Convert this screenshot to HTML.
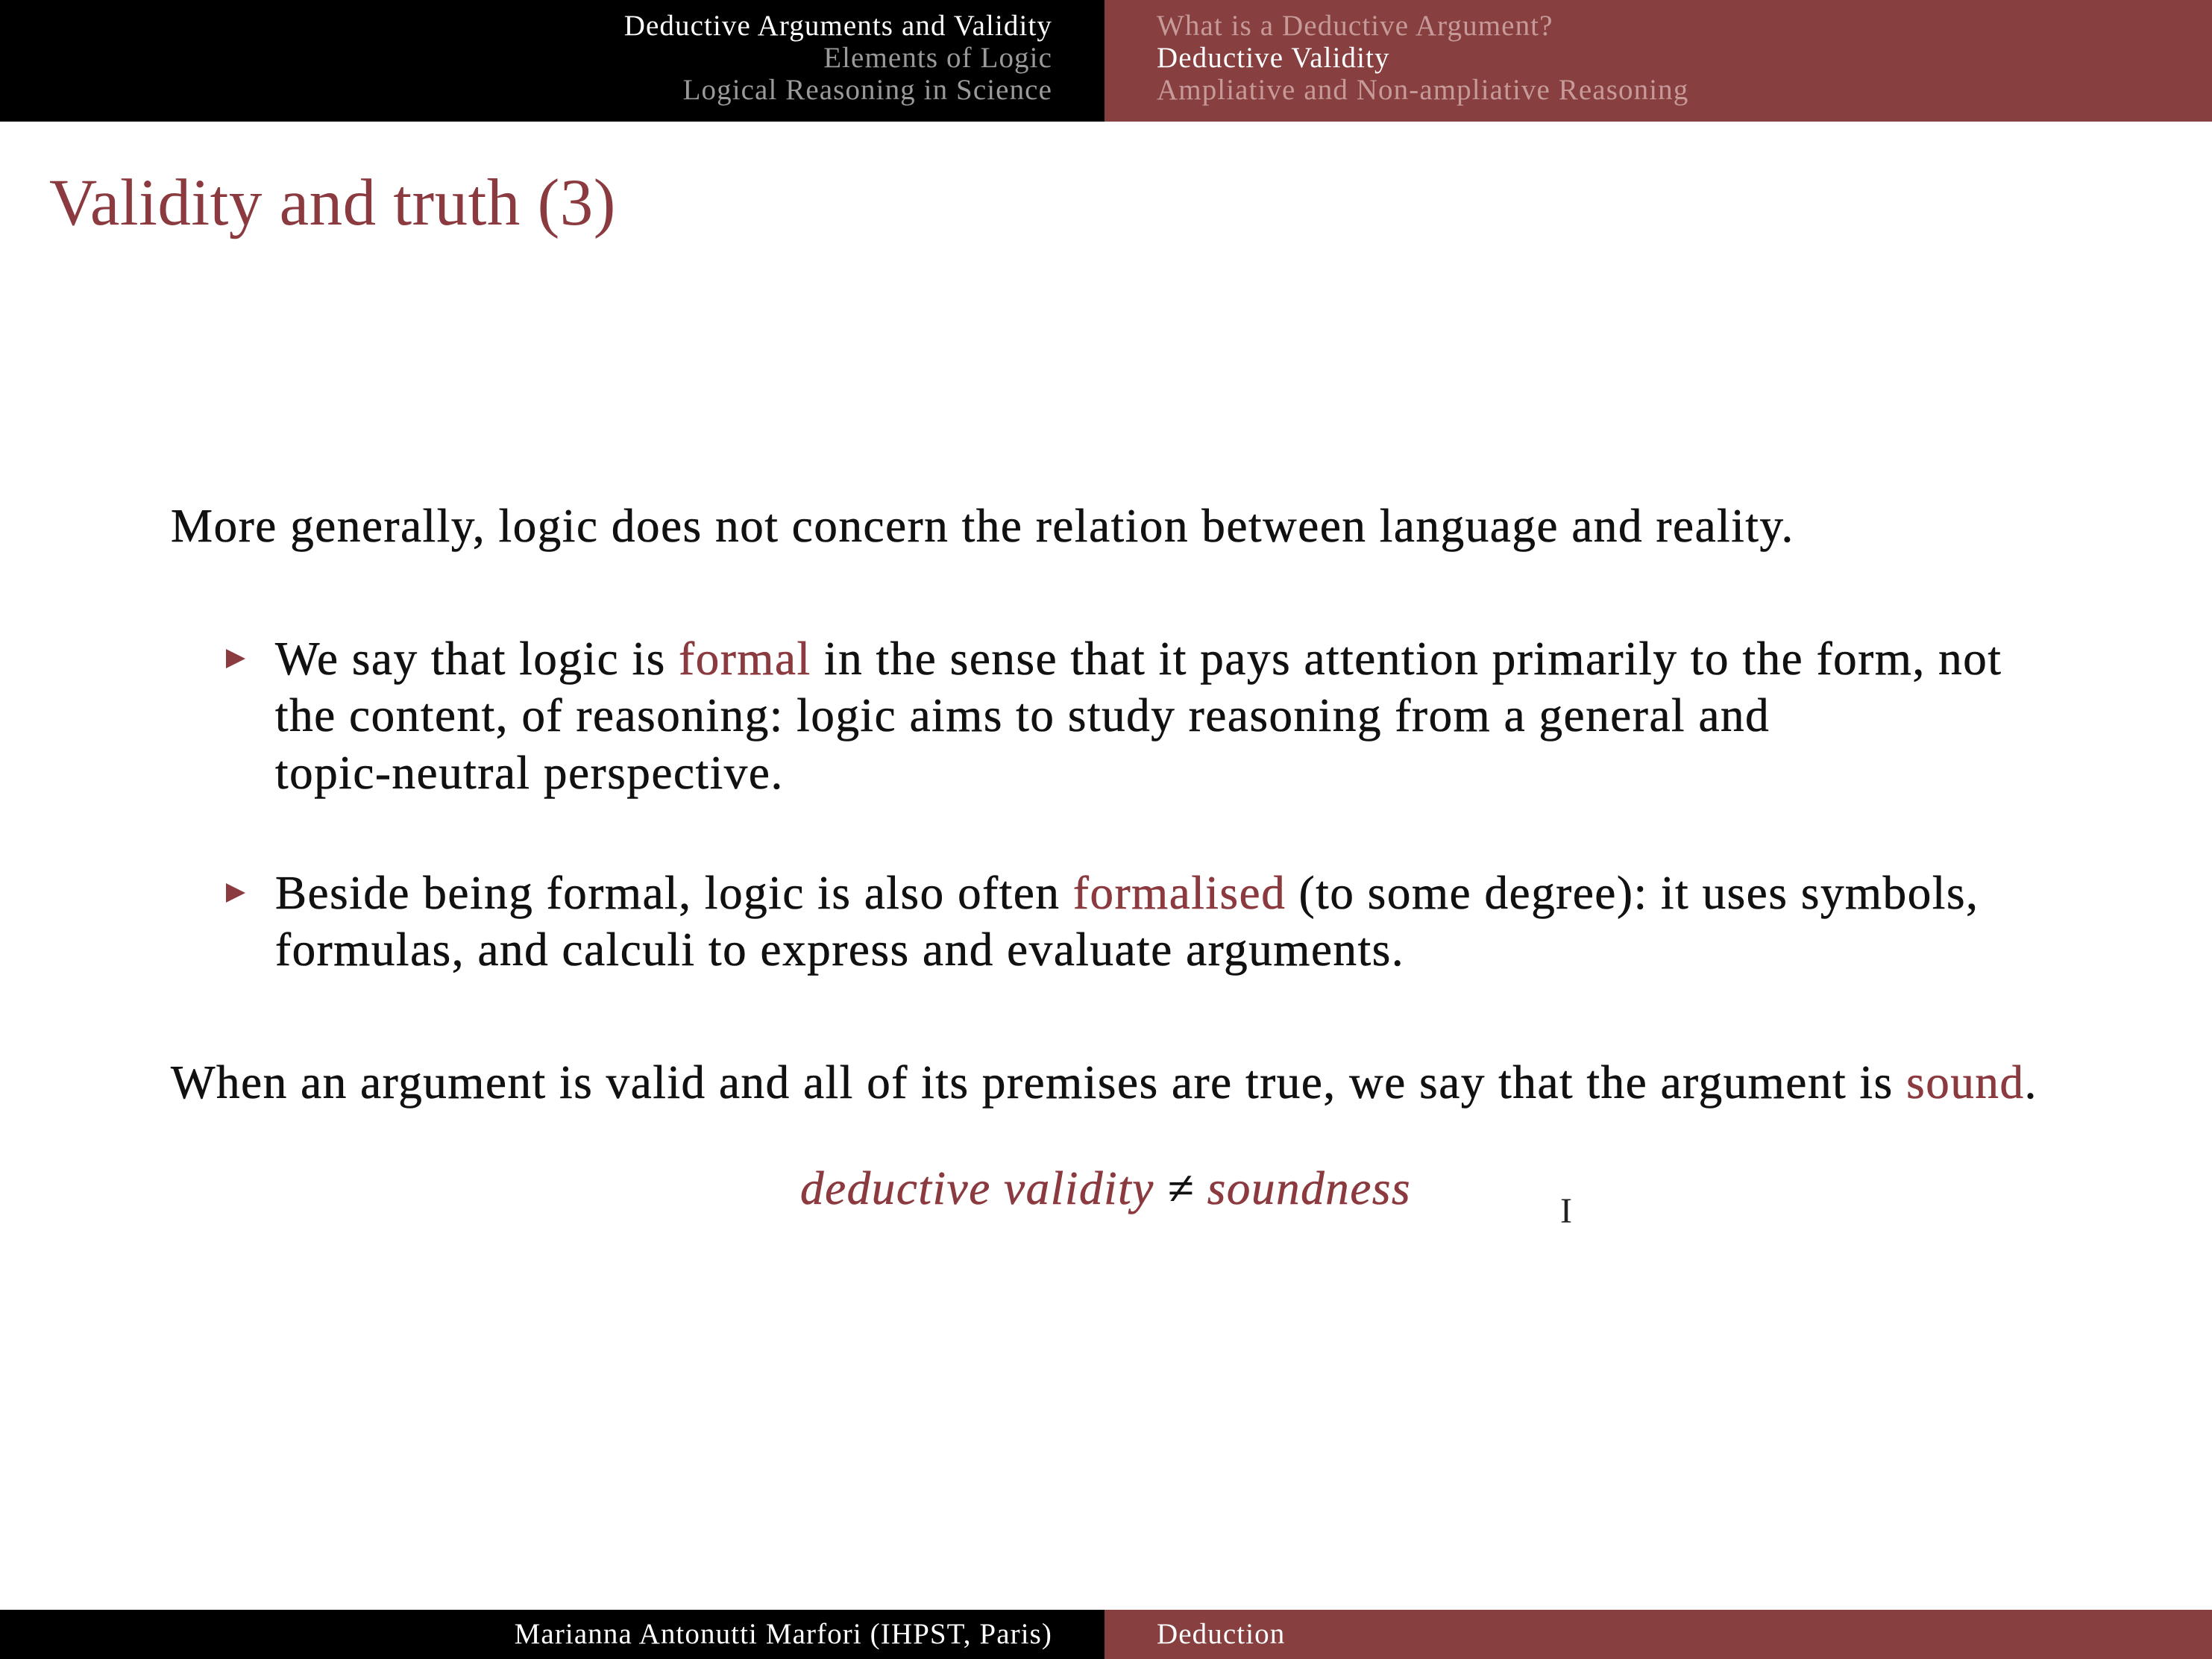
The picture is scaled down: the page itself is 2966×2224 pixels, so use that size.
<!DOCTYPE html>
<html><head><meta charset="utf-8"><style>
html,body{margin:0;padding:0;}
body{width:2966px;height:2224px;position:relative;background:#fff;overflow:hidden;font-family:"Liberation Serif",serif;}
.a{position:absolute;white-space:nowrap;line-height:1;}
.hl{position:absolute;left:0;top:0;width:1481px;height:163px;background:#000;}
.hr{position:absolute;left:1481px;top:0;width:1485px;height:163px;background:#873f3f;}
.fl{position:absolute;left:0;top:2158px;width:1481px;height:66px;background:#000;}
.fr{position:absolute;left:1481px;top:2158px;width:1485px;height:66px;background:#873f3f;}
.h{font-size:39px;letter-spacing:1.1px;}
.rt{right:1555px;text-align:right;}
.b{font-size:63px;color:#111;letter-spacing:1.6px;-webkit-text-stroke:0.6px currentColor;}
.r{color:#8b3a3f;}
.tri{position:absolute;width:0;height:0;border-top:13px solid transparent;border-bottom:13px solid transparent;border-left:26px solid #8b3a3f;}
</style></head><body>
<div class="hl"></div><div class="hr"></div>
<div class="a h rt" style="top:15px;color:#fff;">Deductive Arguments and Validity</div>
<div class="a h rt" style="top:58px;color:#9a9a9a;">Elements of Logic</div>
<div class="a h rt" style="top:101px;color:#9a9a9a;">Logical Reasoning in Science</div>
<div class="a h" style="left:1551px;top:15px;color:#c79a9a;">What is a Deductive Argument?</div>
<div class="a h" style="left:1551px;top:58px;color:#fff;">Deductive Validity</div>
<div class="a h" style="left:1551px;top:101px;color:#c79a9a;">Ampliative and Non-ampliative Reasoning</div>

<div class="a" style="left:66px;top:228px;font-size:89px;letter-spacing:0.5px;color:#8b3a3f;">Validity and truth (3)</div>

<div class="a b" style="left:229px;top:674px;">More generally, logic does not concern the relation between language and reality.</div>
<div class="tri" style="left:303px;top:870px;"></div>
<div class="a b" style="left:369px;top:852px;">We say that logic is <span class="r">formal</span> in the sense that it pays attention primarily to the form, not</div>
<div class="a b" style="left:369px;top:928px;">the content, of reasoning: logic aims to study reasoning from a general and</div>
<div class="a b" style="left:369px;top:1005px;">topic-neutral perspective.</div>
<div class="tri" style="left:303px;top:1184px;"></div>
<div class="a b" style="left:369px;top:1166px;">Beside being formal, logic is also often <span class="r">formalised</span> (to some degree): it uses symbols,</div>
<div class="a b" style="left:369px;top:1242px;">formulas, and calculi to express and evaluate arguments.</div>
<div class="a b" style="left:229px;top:1420px;">When an argument is valid and all of its premises are true, we say that the argument is <span class="r">sound</span>.</div>
<div class="a b" style="left:1073px;top:1562px;font-style:italic;"><span class="r">deductive validity</span> ≠ <span class="r">soundness</span></div>
<div class="a" style="left:2092px;top:1600px;font-size:48px;color:#222;">I</div>

<div class="fl"></div><div class="fr"></div>
<div class="a h rt" style="top:2171px;color:#fff;">Marianna Antonutti Marfori (IHPST, Paris)</div>
<div class="a h" style="left:1551px;top:2171px;color:#fff;">Deduction</div>
</body></html>
